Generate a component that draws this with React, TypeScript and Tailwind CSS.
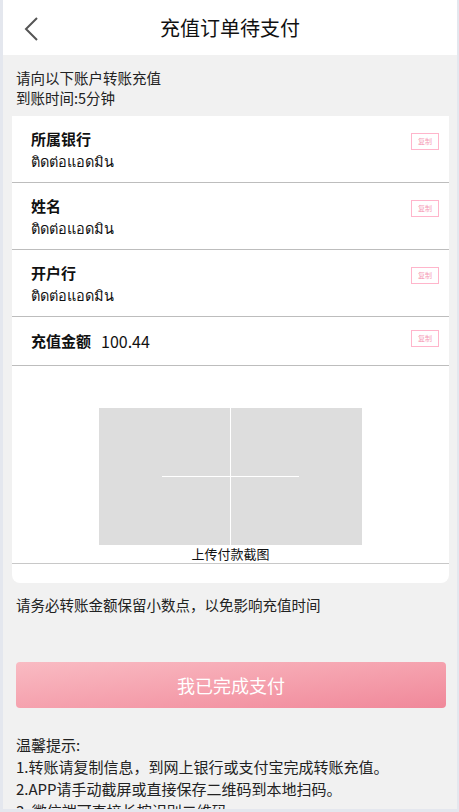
const font = "font-['Microsoft_YaHei','Noto_Sans_CJK_SC','Noto_Sans',sans-serif]";

const CopyButton = ({ className = '' }: { className?: string }) => (
	<button
		className={`flex h-[17px] w-[28px] items-center justify-center border-[1.5px] border-[#ffb5cb] text-[7px] leading-none text-[#f59cb6] ${className}`}
	>
		复制
	</button>
);

const InfoRow = ({ label, value }: { label: string; value: string }) => (
	<div className="flex h-[67px] items-start justify-between border-b border-[#bdbdbd] pl-[19px] pr-[10px]">
		<div className="pt-[12px]">
			<div className="text-[15px] font-bold leading-[22px] text-[#111]">{label}</div>
			<div className="text-[14.5px] leading-[22px] text-[#111]">{value}</div>
		</div>
		<CopyButton className="mt-[17px]" />
	</div>
);

export default function App() {
	return (
		<div
			className={`h-[812px] w-[459px] overflow-hidden border-b-[3px] border-l-[3px] border-r-[2px] border-[#e4e7ee] bg-[#f1f1f1] ${font}`}
		>
			{/* Header */}
			<div className="relative flex h-[55px] items-center justify-center bg-white">
				<svg
					className="absolute left-[21px] top-[17px]"
					width="16"
					height="24"
					viewBox="0 0 16 24"
					fill="none"
					stroke="#555"
					strokeWidth="2"
				>
					<path d="M13 1 L2 12 L13 23" />
				</svg>
				<h1 className="text-[20px] font-normal text-[#111]">充值订单待支付</h1>
			</div>

			{/* Notice */}
			<div className="pl-[13px] pt-[13px] text-[14.5px] leading-[20px] text-[#222]">
				<p>请向以下账户转账充值</p>
				<p>到账时间:5分钟</p>
			</div>

			{/* Card */}
			<div className="ml-[9px] mr-[8px] mt-[8px] rounded-b-[8px] bg-white">
				<InfoRow label="所属银行" value="ติดต่อแอดมิน" />
				<InfoRow label="姓名" value="ติดต่อแอดมิน" />
				<InfoRow label="开户行" value="ติดต่อแอดมิน" />
				<div className="flex h-[49px] items-start justify-between border-b border-[#bdbdbd] pl-[19px] pr-[10px]">
					<div className="flex items-center gap-[10px] pt-[13px] leading-[22px] text-[#111]">
						<span className="text-[15px] font-bold">充值金额</span>
						<span className="text-[16px]">100.44</span>
					</div>
					<CopyButton className="mt-[13px]" />
				</div>

				{/* Upload */}
				<div className="flex flex-col items-center border-b border-[#c8c8c8] pt-[42px]">
					<div className="relative h-[137px] w-[263px] bg-[#dddddd]">
						<div className="absolute bottom-0 left-[131px] top-0 w-[1px] bg-white" />
						<div className="absolute left-[63px] top-[68px] h-[1px] w-[137px] bg-white" />
					</div>
					<p className="text-[13px] leading-[18px] text-[#111]">上传付款截图</p>
				</div>
				<div className="h-[19px]" />
			</div>

			<p className="mt-[12px] pl-[13px] text-[14.5px] leading-[20px] text-[#222]">
				请务必转账金额保留小数点，以免影响充值时间
			</p>

			<button className="ml-[13px] mr-[11px] mt-[47px] flex h-[46px] w-[430px] items-center justify-center rounded-[4px] bg-linear-to-br from-[#f9bbc3] to-[#f0889a] text-[18px] text-white">
				我已完成支付
			</button>

			<div className="mt-[26px] pl-[13px] text-[15px] leading-[22px] text-[#222]">
				<p>温馨提示:</p>
				<p>1.转账请复制信息，到网上银行或支付宝完成转账充值。</p>
				<p>2.APP请手动截屏或直接保存二维码到本地扫码。</p>
				<p>3. 微信端可直接长按识别二维码。</p>
			</div>
		</div>
	);
}
